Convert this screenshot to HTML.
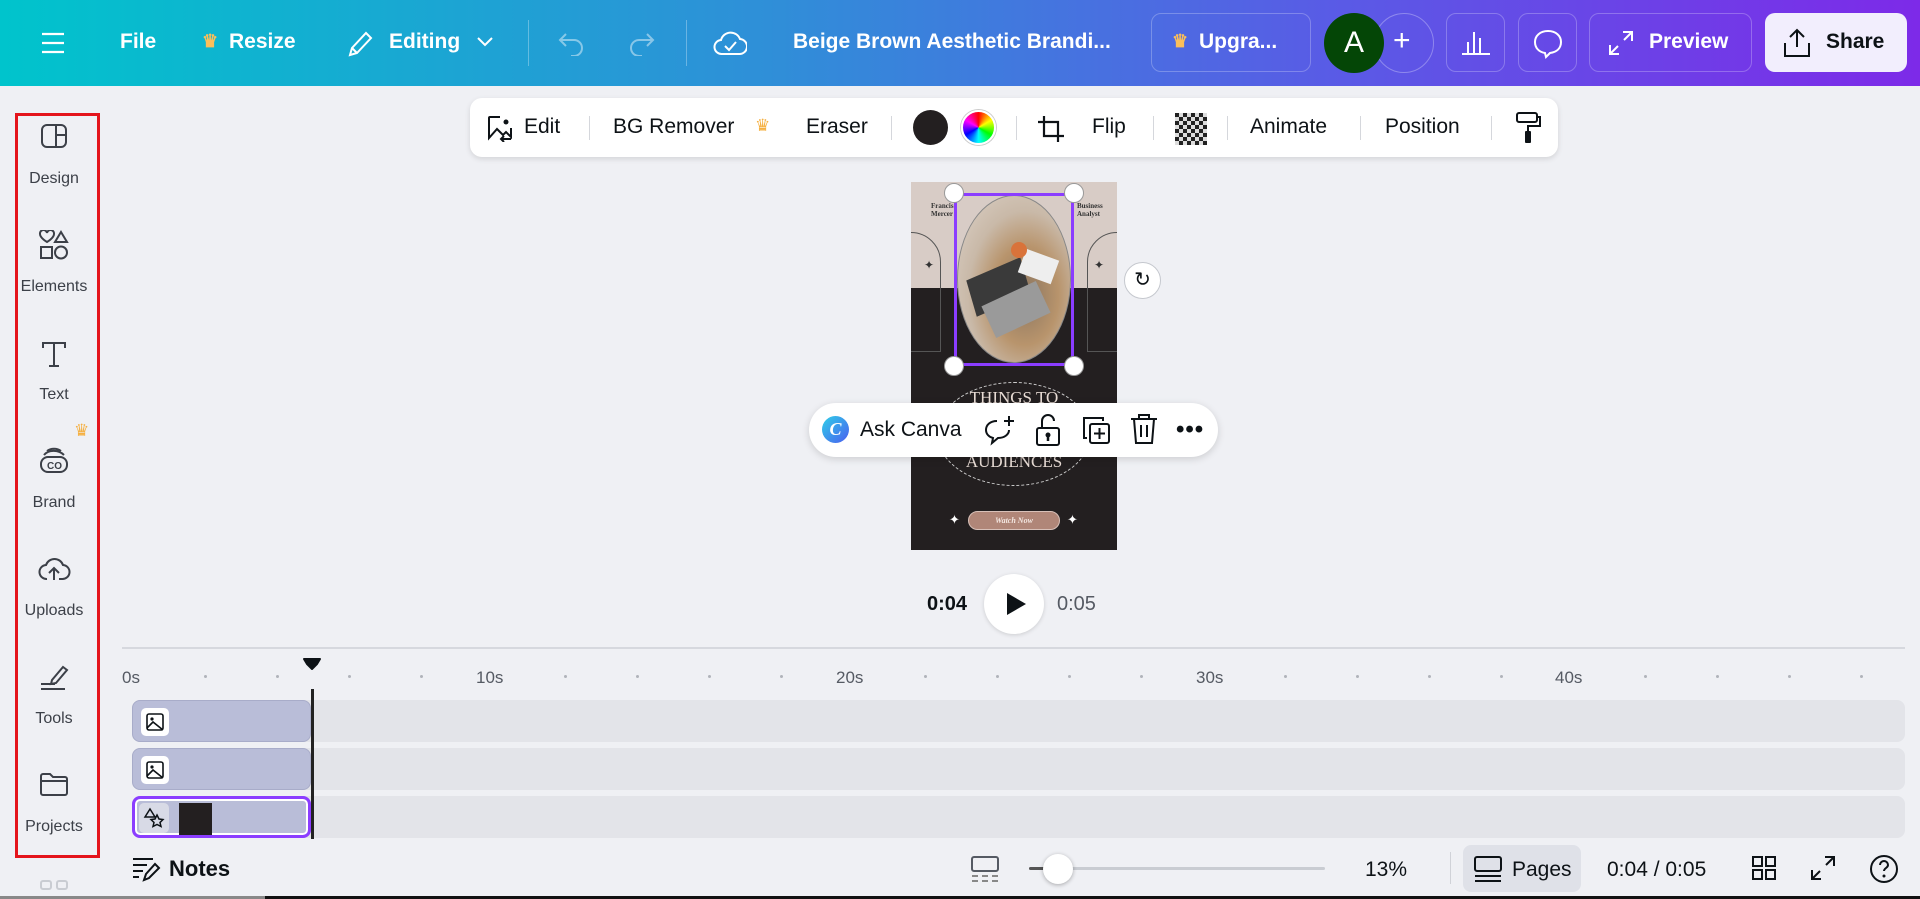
<!DOCTYPE html>
<html><head><meta charset="utf-8"><style>
*{box-sizing:border-box;margin:0;padding:0}
body{width:1920px;height:899px;overflow:hidden;background:#eff0f4;font-family:"Liberation Sans",sans-serif;position:relative;color:#0d1216}
.abs{position:absolute}
.top{left:0;top:0;width:1920px;height:86px;background:linear-gradient(90deg,#00c4cc 0%,#2f8fd8 40%,#5a5ae6 70%,#7d2ae8 100%)}
.tw{color:#fff;font-size:21px;font-weight:bold;top:30px}
.btn{border:1px solid rgba(255,255,255,.25);border-radius:10px;top:13px;height:59px}
.side{left:15px;top:113px;width:85px;height:745px;border:3px solid #e4141c}
.si{left:0;width:108px;text-align:center;font-size:16px;color:#3c4048}
.tb{left:470px;top:98px;width:1088px;height:59px;background:#fff;border-radius:12px;box-shadow:0 2px 6px rgba(0,0,0,.12)}
.tt{font-size:21px;top:17px;color:#0d1216}
.dv{width:1px;height:24px;background:#d5d7dc;top:18px}
.rl{font-size:17px;color:#555a63;top:668px}
.dot{width:3px;height:3px;border-radius:50%;background:#b0b3ba;top:675px}
.row{left:132px;width:1773px;height:42px;background:#e3e4e9;border-radius:8px}
.clip{left:132px;width:179px;height:42px;background:#b9bdd8;border-radius:8px;border:1px solid #a8acc9}
.ci{left:8px;top:7px;width:28px;height:28px;background:#fff;border-radius:5px}
.hd{width:20px;height:20px;border-radius:50%;background:#fff;border:1px solid #999}
</style></head><body>
<div class="abs top"></div>
<svg class="abs" style="left:40px;top:31px" width="26" height="24"><path d="M2 3h22M2 12h22M2 21h22" stroke="#fff" stroke-width="2.2"/></svg>
<div class="abs tw" style="left:120px">File</div>
<div class="abs tw" style="left:202px;color:#fbbf5a;font-size:18px;top:31px">♛</div>
<div class="abs tw" style="left:229px">Resize</div>
<svg class="abs" style="left:346px;top:29px" width="28" height="30"><path d="M4 26l2-7L20 4l5 5L11 24zM6 19l5 5" stroke="#fff" stroke-width="2" fill="none"/></svg>
<div class="abs tw" style="left:389px">Editing</div>
<svg class="abs" style="left:476px;top:36px" width="18" height="12"><path d="M2 2l7 7 7-7" stroke="#fff" stroke-width="2" fill="none"/></svg>
<div class="abs" style="left:528px;top:20px;width:1px;height:46px;background:rgba(255,255,255,.3)"></div>
<svg class="abs" style="left:557px;top:30px" width="30" height="26"><path d="M9 4L3 10l6 6M3 10h14a8 8 0 010 16h-3" stroke="rgba(255,255,255,.45)" stroke-width="2" fill="none"/></svg>
<svg class="abs" style="left:626px;top:30px" width="30" height="26"><path d="M21 4l6 6-6 6M27 10H13a8 8 0 000 16h3" stroke="rgba(255,255,255,.45)" stroke-width="2" fill="none"/></svg>
<div class="abs" style="left:686px;top:20px;width:1px;height:46px;background:rgba(255,255,255,.3)"></div>
<svg class="abs" style="left:713px;top:28px" width="34" height="30"><path d="M9 26a7 7 0 01-1-14 10 10 0 0119-1 7 7 0 01-1 15z" stroke="#fff" stroke-width="2" fill="none"/><path d="M12 18l4 4 7-8" stroke="#fff" stroke-width="2" fill="none"/></svg>
<div class="abs tw" style="left:793px">Beige Brown Aesthetic Brandi...</div>
<div class="abs btn" style="left:1151px;width:160px"></div>
<div class="abs tw" style="left:1172px;color:#fbbf5a;font-size:18px;top:31px">♛</div>
<div class="abs tw" style="left:1199px">Upgra...</div>
<div class="abs" style="left:1374px;top:13px;width:60px;height:60px;border-radius:50%;border:1px solid rgba(255,255,255,.3)"></div>
<div class="abs" style="left:1324px;top:13px;width:60px;height:60px;border-radius:50%;background:#044606;color:#fff;font-size:30px;text-align:center;line-height:60px">A</div>
<div class="abs tw" style="left:1393px;font-size:30px;top:24px;font-weight:normal">+</div>
<div class="abs btn" style="left:1446px;width:59px"></div>
<svg class="abs" style="left:1460px;top:28px" width="32" height="28"><path d="M2 26h28M8 26V14M14 26V4M20 26V10" stroke="#fff" stroke-width="2"/></svg>
<div class="abs btn" style="left:1518px;width:59px"></div>
<svg class="abs" style="left:1532px;top:28px" width="32" height="32"><path d="M16 3C8 3 3 8 3 14c0 6 4 10 10 11l1 4 4-4c7-1 11-5 11-11S24 3 16 3z" stroke="#fff" stroke-width="2" fill="none"/></svg>
<div class="abs btn" style="left:1589px;width:163px"></div>
<svg class="abs" style="left:1608px;top:30px" width="26" height="26"><path d="M15 2h9v9M24 2l-8 8M11 24H2v-9M2 24l8-8" stroke="#fff" stroke-width="2" fill="none"/></svg>
<div class="abs tw" style="left:1649px">Preview</div>
<div class="abs" style="left:1765px;top:13px;width:142px;height:59px;border-radius:10px;background:#f2eefd"></div>
<svg class="abs" style="left:1782px;top:27px" width="30" height="32"><path d="M15 20V3M8 10l7-7 7 7M3 16v13h24V16" stroke="#0d1216" stroke-width="2" fill="none"/></svg>
<div class="abs tw" style="left:1826px;color:#0d1216">Share</div>

<!-- sidebar -->
<div class="abs side"></div>
<svg class="abs" style="left:40px;top:123px" width="28" height="26"><rect x="2" y="2" width="24" height="22" rx="5" stroke="#3c4048" stroke-width="2" fill="none"/><path d="M16 2v22M16 12h10" stroke="#3c4048" stroke-width="2"/></svg>
<div class="abs si" style="top:170px">Design</div>
<svg class="abs" style="left:38px;top:230px" width="32" height="30"><path d="M9 12s-7-4-7-8a3.5 3.5 0 017-1 3.5 3.5 0 017 1c0 4-7 8-7 8zM23 2l6 10H17z" stroke="#3c4048" stroke-width="2" fill="none"/><rect x="3" y="17" width="11" height="11" stroke="#3c4048" stroke-width="2" fill="none"/><circle cx="23" cy="22.5" r="6" stroke="#3c4048" stroke-width="2" fill="none"/></svg>
<div class="abs si" style="top:278px">Elements</div>
<svg class="abs" style="left:40px;top:340px" width="28" height="28"><path d="M3 8V3h22v5M14 3v23M9 26h10" stroke="#3c4048" stroke-width="2" fill="none"/></svg>
<div class="abs si" style="top:386px">Text</div>
<div class="abs" style="left:74px;top:421px;color:#f5b041;font-size:17px">♛</div>
<svg class="abs" style="left:38px;top:445px" width="32" height="30"><rect x="3" y="12" width="26" height="15" rx="7" stroke="#3c4048" stroke-width="2" fill="none"/><path d="M6 10c4-5 14-6 20 0M9 6c4-3 10-3 14 0" stroke="#3c4048" stroke-width="2" fill="none"/><text x="9" y="24" font-size="10" font-weight="bold" fill="#3c4048" font-family="Liberation Sans">CO</text></svg>
<div class="abs si" style="top:494px">Brand</div>
<svg class="abs" style="left:37px;top:555px" width="34" height="28"><path d="M10 24a7 7 0 01-1-14 9 9 0 0117 0 7 7 0 01-1 14h-3M17 25V13M12 18l5-5 5 5" stroke="#3c4048" stroke-width="2" fill="none"/></svg>
<div class="abs si" style="top:602px">Uploads</div>
<svg class="abs" style="left:38px;top:662px" width="32" height="30"><path d="M14 18l11-13 4 3-11 13-5 1zM3 22h14M3 27h24" stroke="#3c4048" stroke-width="2" fill="none"/></svg>
<div class="abs si" style="top:710px">Tools</div>
<svg class="abs" style="left:39px;top:771px" width="30" height="26"><path d="M2 5a2 2 0 012-2h7l3 3h12a2 2 0 012 2v14a2 2 0 01-2 2H4a2 2 0 01-2-2zM2 10h26" stroke="#3c4048" stroke-width="2" fill="none"/></svg>
<div class="abs si" style="top:818px">Projects</div>
<div class="abs" style="left:40px;top:880px;width:12px;height:10px;border:2px solid #c9ccd2;border-radius:3px"></div>
<div class="abs" style="left:56px;top:880px;width:12px;height:10px;border:2px solid #c9ccd2;border-radius:3px"></div>

<!-- toolbar -->
<div class="abs tb"></div>
<svg class="abs" style="left:486px;top:114px" width="28" height="28"><path d="M14 3H4a1 1 0 00-1 1v20l8-9 6 6 3-3 5 5V14" stroke="#0d1216" stroke-width="2" fill="none"/><circle cx="20" cy="8" r="2.5" fill="#0d1216"/><path d="M15 25h10M18 22l-3 3 3 3" stroke="#0d1216" stroke-width="2" fill="none"/></svg>
<div class="abs tt" style="left:524px;top:115px">Edit</div>
<div class="abs dv" style="left:589px;top:116px"></div>
<div class="abs tt" style="left:613px;top:115px">BG Remover</div>
<div class="abs" style="left:755px;top:116px;color:#f5b041;font-size:17px">♛</div>
<div class="abs tt" style="left:806px;top:115px">Eraser</div>
<div class="abs dv" style="left:891px;top:116px"></div>
<div class="abs" style="left:913px;top:110px;width:35px;height:35px;border-radius:50%;background:#231f20"></div>
<div class="abs" style="left:961px;top:110px;width:35px;height:35px;border-radius:50%;background:conic-gradient(red,yellow,lime,cyan,blue,magenta,red);border:2px solid #fff;box-shadow:0 0 0 1px #ccc"></div>
<div class="abs dv" style="left:1016px;top:116px"></div>
<svg class="abs" style="left:1036px;top:114px" width="30" height="30"><path d="M8 2v20h20M2 8h20v20" stroke="#0d1216" stroke-width="2.2" fill="none"/></svg>
<div class="abs tt" style="left:1092px;top:115px">Flip</div>
<div class="abs dv" style="left:1153px;top:116px"></div>
<svg class="abs" style="left:1175px;top:113px" width="32" height="32"><defs><pattern id="ck" width="8" height="8" patternUnits="userSpaceOnUse"><rect width="4" height="4" fill="#222"/><rect x="4" y="4" width="4" height="4" fill="#222"/><rect x="4" width="4" height="4" fill="#ddd"/><rect y="4" width="4" height="4" fill="#ddd"/></pattern></defs><rect width="32" height="32" fill="url(#ck)"/></svg>
<div class="abs dv" style="left:1227px;top:116px"></div>
<div class="abs tt" style="left:1250px;top:115px">Animate</div>
<div class="abs dv" style="left:1360px;top:116px"></div>
<div class="abs tt" style="left:1385px;top:115px">Position</div>
<div class="abs dv" style="left:1491px;top:116px"></div>
<svg class="abs" style="left:1514px;top:111px" width="28" height="34"><rect x="3" y="2" width="20" height="9" rx="2" stroke="#0d1216" stroke-width="2" fill="none"/><path d="M23 6h3v9H14v5" stroke="#0d1216" stroke-width="2" fill="none"/><rect x="11" y="20" width="6" height="12" rx="1" fill="#0d1216"/></svg>

<!-- canvas page -->
<div class="abs" style="left:911px;top:182px;width:206px;height:368px;background:#231f20;overflow:hidden">
  <div class="abs" style="left:0;top:0;width:206px;height:106px;background:#d8ccc6"></div>
  <div class="abs" style="left:-30px;top:50px;width:60px;height:120px;border:1px solid #555;border-radius:30px 30px 0 0"></div>
  <div class="abs" style="left:176px;top:50px;width:60px;height:120px;border:1px solid #555;border-radius:30px 30px 0 0"></div>
  <div class="abs" style="left:20px;top:20px;font:bold 7px 'Liberation Serif',serif;color:#333;line-height:8px">Francis<br>Mercer</div>
  <div class="abs" style="left:166px;top:20px;font:bold 7px 'Liberation Serif',serif;color:#333;line-height:8px">Business<br>Analyst</div>
  <div class="abs" style="left:13px;top:76px;color:#333;font-size:12px">✦</div>
  <div class="abs" style="left:183px;top:76px;color:#333;font-size:12px">✦</div>
  <div class="abs" style="left:46px;top:13px;width:114px;height:168px;border-radius:50%;background:radial-gradient(ellipse at 60% 60%,#8a7560 0%,#b8946c 35%,#c9b9a8 60%,#ddd3ca 100%);border:1px solid #888"></div>
  <div class="abs" style="left:60px;top:85px;width:55px;height:40px;background:#3a3a3a;transform:skew(-10deg) rotate(-25deg)"></div>
  <div class="abs" style="left:75px;top:110px;width:60px;height:35px;background:#9a9a9a;transform:rotate(-25deg)"></div>
  <div class="abs" style="left:110px;top:72px;width:35px;height:25px;background:#eee;transform:rotate(20deg)"></div>
  <div class="abs" style="left:100px;top:60px;width:16px;height:16px;border-radius:50%;background:#d9733a"></div>
  <div class="abs" style="left:26px;top:200px;width:154px;height:104px;border:1px dashed #ccc;border-radius:50%"></div>
  <div class="abs" style="left:0;top:206px;width:206px;text-align:center;color:#e8dcd5;font:17px 'Liberation Serif',serif">THINGS TO</div>
  <div class="abs" style="left:0;top:270px;width:206px;text-align:center;color:#e8dcd5;font:17px 'Liberation Serif',serif">AUDIENCES</div>
  <div class="abs" style="left:57px;top:329px;width:92px;height:19px;border-radius:10px;background:#b08678;border:1px solid #d8c0b8;text-align:center;font:italic bold 8px 'Liberation Serif',serif;color:#f3e6e0;line-height:17px">Watch Now</div>
  <div class="abs" style="left:38px;top:330px;color:#fff;font-size:13px">✦</div>
  <div class="abs" style="left:156px;top:330px;color:#fff;font-size:13px">✦</div>
</div>
<div class="abs" style="left:954px;top:193px;width:120px;height:173px;border:3px solid #8b3dff"></div>
<div class="abs hd" style="left:944px;top:183px"></div>
<div class="abs hd" style="left:1064px;top:183px"></div>
<div class="abs hd" style="left:944px;top:356px"></div>
<div class="abs hd" style="left:1064px;top:356px"></div>
<div class="abs" style="left:1124px;top:262px;width:37px;height:37px;border-radius:50%;background:#fff;border:1px solid #c5c8ce;text-align:center;line-height:35px;font-size:20px">↻</div>

<!-- ask canva pill -->
<div class="abs" style="left:809px;top:403px;width:409px;height:54px;background:#fff;border-radius:27px;box-shadow:0 2px 8px rgba(0,0,0,.15)"></div>
<div class="abs" style="left:822px;top:416px;width:27px;height:27px;border-radius:50%;background:linear-gradient(135deg,#2fd0e8,#4a5ef0);color:#fff;font:bold italic 18px 'Liberation Serif',serif;text-align:center;line-height:27px">C</div>
<div class="abs" style="left:860px;top:418px;font-size:21px">Ask Canva</div>
<svg class="abs" style="left:983px;top:414px" width="34" height="34"><path d="M14 7C7 7 3 11 3 16c0 4 3 7 7 8l-1 5 6-5c7 0 11-4 11-8" stroke="#0d1216" stroke-width="2" fill="none"/><path d="M26 2v10M21 7h10" stroke="#0d1216" stroke-width="2"/></svg>
<svg class="abs" style="left:1033px;top:412px" width="30" height="36"><rect x="4" y="16" width="22" height="17" rx="2" stroke="#0d1216" stroke-width="2" fill="none"/><path d="M9 16V9a6 6 0 0112 0" stroke="#0d1216" stroke-width="2" fill="none"/><circle cx="15" cy="23" r="2.5" fill="#0d1216"/><path d="M15 24v5" stroke="#0d1216" stroke-width="2.5"/></svg>
<svg class="abs" style="left:1080px;top:414px" width="32" height="32"><path d="M7 24H4V4h19v3" stroke="#0d1216" stroke-width="2" fill="none"/><rect x="10" y="10" width="19" height="19" rx="2" stroke="#0d1216" stroke-width="2" fill="none"/><path d="M19.5 14v11M14 19.5h11" stroke="#0d1216" stroke-width="2"/></svg>
<svg class="abs" style="left:1129px;top:413px" width="30" height="32"><path d="M2 6h26M10 6V2h10v4M5 6l2 24h16l2-24M12 12v12M18 12v12" stroke="#0d1216" stroke-width="2" fill="none"/></svg>
<div class="abs" style="left:1176px;top:416px;font-size:24px;font-weight:bold;letter-spacing:1px">•••</div>

<!-- playback -->
<div class="abs" style="left:927px;top:593px;font-size:20px;font-weight:bold">0:04</div>
<div class="abs" style="left:984px;top:574px;width:60px;height:60px;border-radius:50%;background:#fff;box-shadow:0 1px 4px rgba(0,0,0,.15)"></div>
<svg class="abs" style="left:1005px;top:592px" width="22" height="24"><path d="M2 1l19 11L2 23z" fill="#0d1216"/></svg>
<div class="abs" style="left:1057px;top:593px;font-size:20px;color:#555a63">0:05</div>

<!-- timeline -->
<div class="abs" style="left:122px;top:647px;width:1783px;height:2px;background:#d6d8de"></div>
<div class="abs rl" style="left:122px">0s</div>
<div class="abs rl" style="left:476px">10s</div>
<div class="abs rl" style="left:836px">20s</div>
<div class="abs rl" style="left:1196px">30s</div>
<div class="abs rl" style="left:1555px">40s</div>
<div class="abs dot" style="left:204px"></div><div class="abs dot" style="left:276px"></div><div class="abs dot" style="left:348px"></div><div class="abs dot" style="left:420px"></div>
<div class="abs dot" style="left:564px"></div><div class="abs dot" style="left:636px"></div><div class="abs dot" style="left:708px"></div><div class="abs dot" style="left:780px"></div>
<div class="abs dot" style="left:924px"></div><div class="abs dot" style="left:996px"></div><div class="abs dot" style="left:1068px"></div><div class="abs dot" style="left:1140px"></div>
<div class="abs dot" style="left:1284px"></div><div class="abs dot" style="left:1356px"></div><div class="abs dot" style="left:1428px"></div><div class="abs dot" style="left:1500px"></div>
<div class="abs dot" style="left:1644px"></div><div class="abs dot" style="left:1716px"></div><div class="abs dot" style="left:1788px"></div><div class="abs dot" style="left:1860px"></div>
<div class="abs row" style="top:700px"></div>
<div class="abs row" style="top:748px"></div>
<div class="abs row" style="top:796px"></div>
<div class="abs clip" style="top:700px"><div class="abs ci"><svg width="28" height="28"><rect x="6" y="6" width="16" height="16" rx="2" stroke="#0d1216" stroke-width="1.6" fill="none"/><circle cx="11" cy="11" r="1.6" fill="#0d1216"/><path d="M6 20l6-6 10 8" stroke="#0d1216" stroke-width="1.6" fill="none"/></svg></div></div>
<div class="abs clip" style="top:748px"><div class="abs ci"><svg width="28" height="28"><rect x="6" y="6" width="16" height="16" rx="2" stroke="#0d1216" stroke-width="1.6" fill="none"/><circle cx="11" cy="11" r="1.6" fill="#0d1216"/><path d="M6 20l6-6 10 8" stroke="#0d1216" stroke-width="1.6" fill="none"/></svg></div></div>
<div class="abs clip" style="top:796px;border:3px solid #8b3dff;box-shadow:inset 0 0 0 2px #fff">
  <div class="abs" style="left:4px;top:4px;width:30px;height:30px;background:#d8dae6;border-radius:5px"><svg width="30" height="30"><path d="M11 6l5 8H6zM18 12l2 4 4 .5-3 3 1 4-4-2-4 2 1-4-3-3 4-.5z" stroke="#0d1216" stroke-width="1.5" fill="none"/></svg></div>
  <div class="abs" style="left:44px;top:4px;width:33px;height:32px;background:#231f20"></div>
</div>
<div class="abs" style="left:311px;top:689px;width:3px;height:150px;background:#222"></div>
<svg class="abs" style="left:302px;top:657px" width="20" height="14"><path d="M2 2h16l-3 5-5 5-5-5z" fill="#0d1216" stroke="#0d1216" stroke-width="2" stroke-linejoin="round"/></svg>

<!-- bottom bar -->
<svg class="abs" style="left:131px;top:856px" width="30" height="26"><path d="M2 3h20M2 9h14M2 15h10M2 21h6" stroke="#0d1216" stroke-width="2"/><path d="M13 24l2-6 9-10 4 4-10 10z" stroke="#0d1216" stroke-width="2" fill="none"/></svg>
<div class="abs" style="left:169px;top:856px;font-size:22px;font-weight:bold">Notes</div>
<svg class="abs" style="left:970px;top:855px" width="30" height="28"><rect x="2" y="2" width="26" height="14" rx="2" stroke="#555a63" stroke-width="2" fill="none"/><path d="M2 21h6M12 21h6M22 21h6M2 26h6M12 26h6M22 26h6" stroke="#888" stroke-width="2"/></svg>
<div class="abs" style="left:1029px;top:867px;width:296px;height:3px;background:#c9ccd2;border-radius:2px"></div>
<div class="abs" style="left:1029px;top:867px;width:30px;height:3px;background:#555;border-radius:2px"></div>
<div class="abs" style="left:1043px;top:854px;width:30px;height:30px;border-radius:50%;background:#fff;box-shadow:0 1px 4px rgba(0,0,0,.3)"></div>
<div class="abs" style="left:1365px;top:858px;font-size:21px">13%</div>
<div class="abs" style="left:1450px;top:852px;width:1px;height:32px;background:#d0d2d8"></div>
<div class="abs" style="left:1463px;top:845px;width:118px;height:47px;border-radius:8px;background:#dfe1e8"></div>
<svg class="abs" style="left:1473px;top:855px" width="30" height="28"><rect x="2" y="2" width="26" height="14" rx="2" stroke="#0d1216" stroke-width="2" fill="none"/><path d="M2 21h26M2 26h26" stroke="#0d1216" stroke-width="2"/></svg>
<div class="abs" style="left:1512px;top:858px;font-size:21px">Pages</div>
<div class="abs" style="left:1607px;top:858px;font-size:21px">0:04 / 0:05</div>
<svg class="abs" style="left:1751px;top:855px" width="26" height="26"><rect x="2" y="2" width="9" height="9" stroke="#0d1216" stroke-width="2" fill="none"/><rect x="15" y="2" width="9" height="9" stroke="#0d1216" stroke-width="2" fill="none"/><rect x="2" y="15" width="9" height="9" stroke="#0d1216" stroke-width="2" fill="none"/><rect x="15" y="15" width="9" height="9" stroke="#0d1216" stroke-width="2" fill="none"/></svg>
<svg class="abs" style="left:1810px;top:855px" width="26" height="26"><path d="M15 2h9v9M24 2l-8 8M11 24H2v-9M2 24l8-8" stroke="#0d1216" stroke-width="2" fill="none"/></svg>
<svg class="abs" style="left:1868px;top:853px" width="32" height="32"><circle cx="16" cy="16" r="13" stroke="#0d1216" stroke-width="2" fill="none"/><path d="M12 12a4 4 0 118 0c0 3-4 3-4 6" stroke="#0d1216" stroke-width="2" fill="none"/><circle cx="16" cy="23" r="1.5" fill="#0d1216"/></svg>
<div class="abs" style="left:0;top:896px;width:265px;height:3px;background:#888"></div>
<div class="abs" style="left:265px;top:896px;width:1655px;height:3px;background:#111"></div>
</body></html>
